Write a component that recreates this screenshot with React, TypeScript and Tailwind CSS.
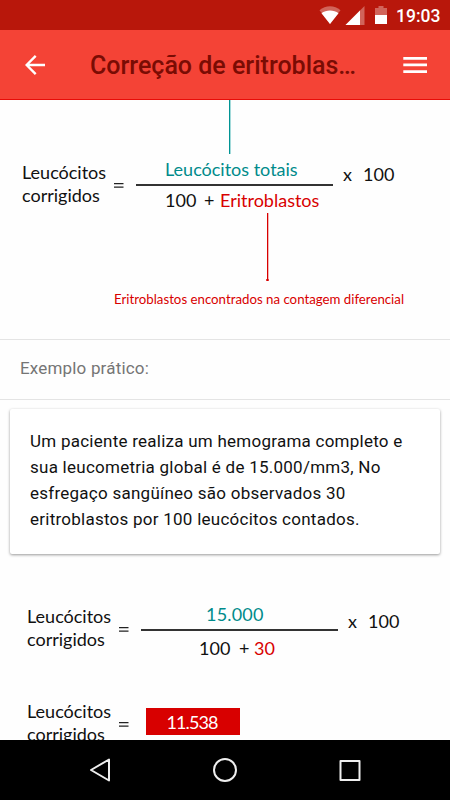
import type { ReactNode } from 'react';

function StatusBar() {
  return (
    <div className="flex h-[30px] items-center justify-end bg-[#b8170b]">
      <svg width="76" height="30" viewBox="0 0 76 30" className="shrink-0">
        {/* wifi */}
        <path d="M0.5 10.3C6.5 5 15.500 5 21.500 10.300L11 24Z" fill="#d1645a" />
        <path d="M2.500 13.200C7 9.600 15 9.600 19.500 13.200L11 24Z" fill="#fff" />
        {/* signal */}
        <path d="M45.500 6V25H26.500Z" fill="#d1645a" />
        <path d="M41 10.500V25H26.500Z" fill="#fff" />
        {/* battery */}
        <path d="M56 8H59.500V6H64.500V8H68V15H56Z" fill="#d1645a" />
        <path d="M56 15H68V24H56Z" fill="#fff" />
      </svg>
      <span className="w-[55px] pl-[1px] pt-[1px] text-[17.5px] font-medium leading-[30px] text-white">19:03</span>
    </div>
  );
}

function Header() {
  return (
    <header className="flex h-[70px] items-center border-b border-[#e80c08] bg-[#f44336]">
      <svg width="20" height="20" viewBox="0 0 20 20" className="ml-[25px] shrink-0" fill="none" stroke="#fff" strokeWidth="2.4">
        <path d="M20 10H2M10.700 0.900L1.600 10L10.700 19.100" />
      </svg>
      <h1 className="ml-[45px] w-[300px] whitespace-nowrap pt-[2px] text-[25px] font-medium leading-[68px] text-[#7a0c04]">
        Correção de eritroblas…
      </h1>
      <svg width="24" height="16" viewBox="0 0 24 16" className="ml-[13px] mt-[1px] shrink-0" fill="#fff">
        <path d="M0.300 0H24V2.700H0.300ZM0.300 6.600H24V9.300H0.300ZM0.300 13.200H24V16H0.300Z" />
      </svg>
    </header>
  );
}

function Label() {
  return (
    <div className="w-[92px] shrink-0 whitespace-nowrap leading-[22.500px]">
      <div>Leucócitos</div>
      <div>corrigidos</div>
    </div>
  );
}

function Equals() {
  return (
    <svg width="10" height="5" viewBox="0 0 10 5" className="mr-[-1px] mt-[22px] shrink-0" fill="#222">
      <path d="M0 0H9.500V1.300H0ZM0 3.500H9.500V4.800H0Z" />
    </svg>
  );
}

function Fraction({ top, bottom }: { top: ReactNode; bottom: ReactNode }) {
  return (
    <div className="ml-[13px] w-[197px] shrink-0">
      <div className="text-[#008b8b]">{top}</div>
      <div className="mb-[3px] mt-[4px] h-[2px] bg-[#333]" />
      <div className="flex">{bottom}</div>
    </div>
  );
}

export default function App() {
  return (
    <div className="flex h-[800px] w-[450px] flex-col overflow-hidden bg-[#fefefe] font-['Roboto',sans-serif]">
      <StatusBar />
      <Header />

      <main className="h-[640px] overflow-hidden">
        <section className="h-[239px] font-['Lato',sans-serif] text-[18px] leading-[22px] text-[#111]">
          <div className="ml-[229px] h-[54px] w-[2px] border-r border-[#a3dada] bg-[#009494]" />
          <div className="flex pl-[22px] pt-[4px]">
            <div className="flex pt-[3px]">
              <Label />
              <Equals />
            </div>
            <Fraction
              top={<div className="pl-[29px]">Leucócitos totais</div>}
              bottom={
                <>
                  <span className="ml-[29px] w-[39px]">100</span>
                  <span className="w-[16px]">+</span>
                  <span className="text-[#d80000]">Eritroblastos</span>
                </>
              }
            />
            <div className="ml-[10px] flex pt-[5px]">
              <span className="w-[20px]">x</span>
              <span>100</span>
            </div>
          </div>
          <div className="ml-[266px] mt-[2px] flex h-[68px] w-[3px] flex-col items-center">
            <div className="ml-[1px] w-[2px] flex-1 border-r border-[#f5b5b5] bg-[#d80000]" />
            <div className="h-[2px] w-[3px] rounded-full bg-[#d80000]" />
          </div>
          <div className="ml-[114px] mt-[8px] whitespace-nowrap text-[13.250px] leading-[20px] text-[#d80000]">
            Eritroblastos encontrados na contagem diferencial
          </div>
        </section>

        <div className="flex h-[61px] items-center border-y border-[#e4e4e4] pb-[2px] pl-[20px] text-[17px] tracking-[0.180px] text-[#757575]">
          Exemplo prático:
        </div>

        <div className="mx-[10px] mt-[9px] h-[145px] rounded-[2px] bg-white pl-[20px] pt-[18.500px] text-[17px] leading-[26.200px] tracking-[0.250px] text-[#111] shadow-[0_1px_3px_rgba(0,0,0,0.4)]">
          <p className="whitespace-nowrap">
            Um paciente realiza um hemograma completo e<br />
            sua leucometria global é de 15.000/mm3, No<br />
            esfregaço sangüíneo são observados 30<br />
            eritroblastos por 100 leucócitos contados.
          </p>
        </div>

        <section className="pt-[51px] font-['Lato',sans-serif] text-[18px] leading-[22px] text-[#111]">
          <div className="flex h-[95px] pl-[27px]">
            <div className="flex">
              <Label />
              <Equals />
            </div>
            <div className="-mt-[2px]">
              <Fraction
                top={<div className="pl-[65px] tracking-[0.200px]">15.000</div>}
                bottom={
                  <div className="flex pt-[3px]">
                    <span className="ml-[58px] w-[40px]">100</span>
                    <span className="w-[15px]">+</span>
                    <span className="text-[#d80000]">30</span>
                  </div>
                }
              />
            </div>
            <div className="ml-[10px] flex pt-[5px]">
              <span className="w-[20px]">x</span>
              <span>100</span>
            </div>
          </div>
          <div className="flex pl-[27px]">
            <Label />
            <Equals />
            <div className="ml-[18px] mt-[8px] h-[27px] w-[94px] bg-[#d80000] pr-[2px] text-center tracking-[-0.900px] leading-[29px] text-white">
              11.538
            </div>
          </div>
        </section>
      </main>

      <nav className="flex h-[60px] items-center bg-black">
        <svg width="450" height="60" viewBox="0 0 450 60" fill="none" stroke="#eee" strokeWidth="2" strokeLinejoin="round">
          <path d="M109 19.500V40.500L91 30Z" />
          <circle cx="225" cy="30" r="11" />
          <rect x="340.500" y="21" width="19" height="19" />
        </svg>
      </nav>
    </div>
  );
}
